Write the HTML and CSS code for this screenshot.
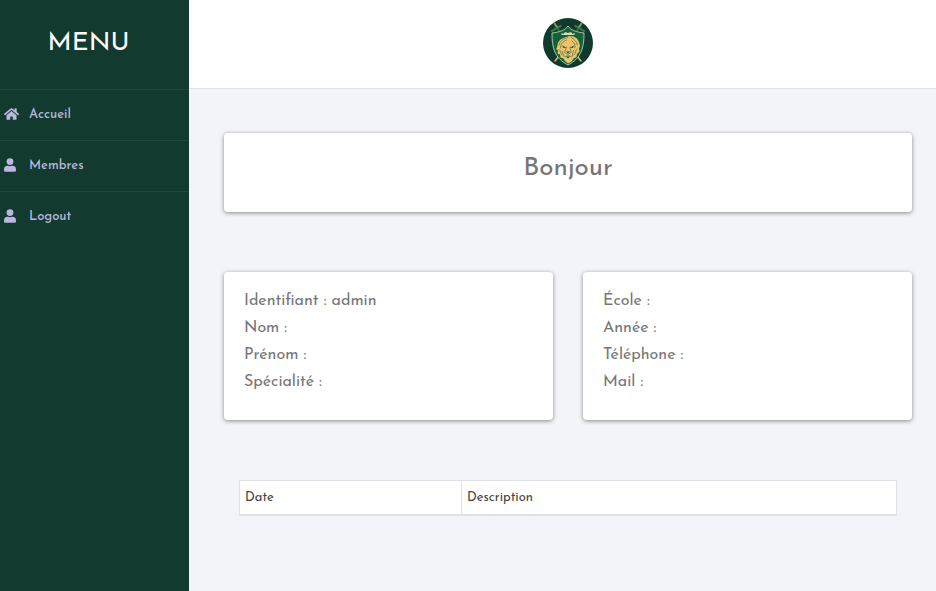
FILE: index.html
```
<!DOCTYPE html>
<html lang="fr">
<head>
<meta charset="utf-8">
<meta name="viewport" content="width=device-width, initial-scale=1">
<title>Accueil</title>
<link rel="stylesheet" href="styles.css">
</head>
<body>
<div class="layout">
  <aside class="sidebar">
    <h2 class="sidebar-title">MENU</h2>
    <nav>
      <ul class="menu">
        <li><a href="#accueil">
          <svg class="icon home" viewBox="0 0 576 512" aria-hidden="true"><path d="M280 148 96 300v164a16 16 0 0 0 16 16h112a16 16 0 0 0 16-16v-96a16 16 0 0 1 16-16h64a16 16 0 0 1 16 16v96a16 16 0 0 0 16 16h112a16 16 0 0 0 16-16V300L296 148a12 12 0 0 0-16 0zM572 251l-84-69V44a12 12 0 0 0-12-12h-56a12 12 0 0 0-12 12v72l-90-74a48 48 0 0 0-61 0L4 251a12 12 0 0 0-2 17l26 31a12 12 0 0 0 17 2L280 107a12 12 0 0 1 16 0l235 194a12 12 0 0 0 17-2l26-31a12 12 0 0 0-2-17z"/></svg>
          <span>Accueil</span></a></li>
        <li><a href="#membres">
          <svg class="icon" viewBox="0 0 448 512" aria-hidden="true"><path d="M224 256a128 128 0 1 0 0-256 128 128 0 0 0 0 256zm90 32h-17a174 174 0 0 1-146 0h-17A134 134 0 0 0 0 422v42a48 48 0 0 0 48 48h352a48 48 0 0 0 48-48v-42a134 134 0 0 0-134-134z"/></svg>
          <span>Membres</span></a></li>
        <li><a href="#logout">
          <svg class="icon" viewBox="0 0 448 512" aria-hidden="true"><path d="M224 256a128 128 0 1 0 0-256 128 128 0 0 0 0 256zm90 32h-17a174 174 0 0 1-146 0h-17A134 134 0 0 0 0 422v42a48 48 0 0 0 48 48h352a48 48 0 0 0 48-48v-42a134 134 0 0 0-134-134z"/></svg>
          <span>Logout</span></a></li>
      </ul>
    </nav>
  </aside>
  <div class="page">
    <header class="topbar">
      <svg class="logo" viewBox="0 0 100 100" role="img" aria-label="Logo">
        <circle cx="50" cy="50" r="50" fill="#103a2e"/>
        <g fill="none" stroke-linecap="round">
          <path d="M25 15 74 84M75 15 26 84" stroke="#2c7546" stroke-width="4"/>
          <path d="M18 26l17-10M65 16l17 10" stroke="#39703f" stroke-width="5"/>
          <path d="M23 11l5 7M77 11l-5 7" stroke="#7f9a50" stroke-width="4"/>
          <path d="M32 76l-8 10M68 76l8 10" stroke="#c6b160" stroke-width="3"/>
        </g>
        <path d="M50 16C44 25 33 28 18 30c0 30 5 50 32 64 27-14 32-34 32-64-15-2-26-5-32-14z" fill="#17653d" stroke="#a9c3a0" stroke-width="2"/>
        <path d="M50 21C44 28 35 31 23 33c1 25 6 44 27 56 21-12 26-31 27-56-12-2-21-5-27-12z" fill="#12603a"/>
        <path d="M37 34v-4l4 2 3-4 6 2 6-2 3 4 4-2v4z" fill="#d8ddb5"/>
        <path d="M52 36l-9 3-8 4-5 6-2 10-2 3 4 3-1 6 5 2 1 6 6 2 3 5 6 5 7-4 4-6 6-3 1-6 5-5-1-6 2-5-2-8-4-7-7-4z" fill="#ebc46d"/>
        <g fill="none" stroke="#5e7040" stroke-width="1.5" stroke-linecap="round">
          <path d="M50 39c-9 2-16 7-18 15M47 44c-7 3-12 8-12 16M56 39c7 3 11 8 13 15M58 46c5 4 7 8 6 14M32 63c4 3 2 7 6 11M68 62c-4 3-1 7-6 12M47 58l-4 11 7 4 6-4-2-11M44 77c4-2 8-2 12 0M38 66l4 11M61 65l-3 12"/>
        </g>
        <path d="M38 55l9 4-6 1zM62 55l-8 4 6 1zM46 67h8l-4 4zM46 77h8l-4 4z" fill="#1d5138"/>
      </svg>
    </header>
    <main class="content">
      <section class="card welcome"><h1>Bonjour</h1></section>
      <div class="cards">
        <section class="card details">
          <p>Identifiant : admin</p><p>Nom :</p><p>Prénom :</p><p>Spécialité :</p>
        </section>
        <section class="card details">
          <p>École :</p><p>Année :</p><p>Téléphone :</p><p>Mail :</p>
        </section>
      </div>
      <div class="table-wrap">
        <table>
          <thead><tr><th class="date" scope="col">Date</th><th scope="col">Description</th></tr></thead>
        </table>
      </div>
    </main>
  </div>
</div>
</body>
</html>
```
FILE: styles.css
```
* { box-sizing: border-box; }
body {
  margin: 0;
  background: #f3f4f9;
  color: #757575;
  font-family: "Josefin Sans", Lato, sans-serif;
}
h1, h2, p, ul { margin: 0; padding: 0; }
.layout { display: flex; min-height: 100vh; }
.sidebar { flex: 0 0 189px; background: #123a2f; }
.sidebar-title {
  padding: 24px 12px 25px 0;
  color: #fff;
  font-size: 26px;
  font-weight: 400;
  line-height: 40px;
  text-align: center;
}
.menu { list-style: none; }
.menu a {
  display: flex;
  align-items: center;
  gap: 13px;
  height: 51px;
  padding: 0 4px 2px;
  border-top: 1px solid #1f463a;
  color: #bab8dc;
  font-size: 13px;
  font-weight: 500;
  text-decoration: none;
}
.icon { width: 12px; height: 14px; fill: currentColor; }
.icon.home { width: 15px; margin-right: -3px; }
.page { flex: 1; min-width: 0; }
.topbar {
  display: flex;
  justify-content: center;
  padding: 18px 0 20px 10px;
  background: #fff;
  border-bottom: 1px solid #dee2e6;
}
.logo { width: 50px; height: 50px; }
.content { padding: 44px 24px 44px 35px; }
.card {
  background: #fff;
  border-radius: 4px;
  box-shadow: 0 1px 4px rgba(0, 0, 0, .45);
}
.welcome { padding: 18px 20px 25px; text-align: center; }
.welcome h1 { font-size: 26px; font-weight: 400; line-height: 36px; }
.cards {
  display: grid;
  grid-template-columns: 1fr 1fr;
  gap: 30px;
  margin: 60px 0;
}
.details {
  padding: 16px 20px 24px;
  font-size: 16px;
  line-height: 27px;
}
.table-wrap { padding: 0 15px; }
table {
  width: 100%;
  border-collapse: collapse;
  background: #fff;
  color: #444;
  font-size: 13px;
}
th {
  height: 34px;
  padding: 0 5px;
  border: 1px solid #dee2e6;
  border-bottom-width: 2px;
  font-weight: 400;
  text-align: left;
}
.date { width: 222px; }
```
